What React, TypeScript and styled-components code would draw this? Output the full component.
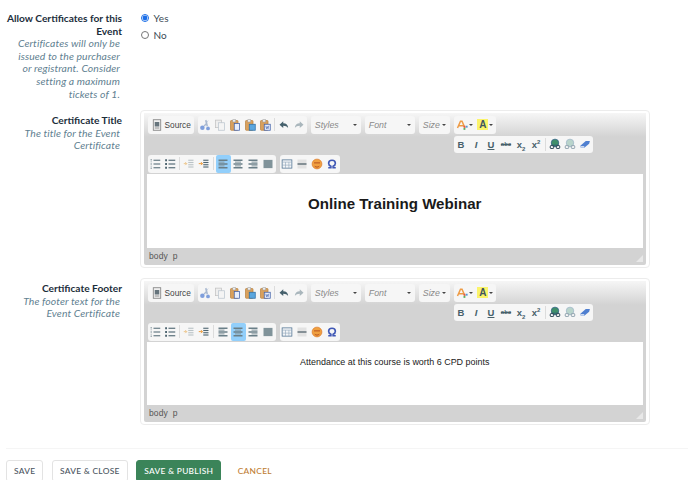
import * as React from 'react';
import styled, { createGlobalStyle } from 'styled-components';

const GlobalStyle = createGlobalStyle`
  html, body {
    margin: 0;
    height: 480px;
    overflow: hidden;
    background: #fff;
    font-family: 'Lato', 'Noto Sans', sans-serif;
  }
`;

const Page = styled.div`
  width: 688px;
  height: 480px;
  overflow: hidden;
  box-sizing: border-box;
  padding-top: 12px;
`;

const FormRow = styled.div`
  display: grid;
  grid-template-columns: 122px 510px;
  column-gap: 18px;
  margin-bottom: 10px;
`;

const Label = styled.div<{ $top?: number }>`
  text-align: right;
  padding-top: ${p => p.$top ?? 0}px;
`;

const Title = styled.div`
  font-size: 10.2px;
  line-height: 12.6px;
  font-weight: 700;
  color: #1c2e3b;
`;

const Help = styled.div`
  font-size: 10.4px;
  line-height: 12.6px;
  font-style: italic;
  letter-spacing: 0.1px;
  color: #5f7f91;
  padding: 0 2px 0 8px;
`;

const Options = styled.div`
  display: flex;
  flex-direction: column;
  gap: 5px;
`;

const Option = styled.label`
  display: flex;
  align-items: center;
  gap: 5px;
  height: 12px;
  font-size: 10px;
  letter-spacing: 0.1px;
  color: #3a4a55;
`;

const Radio = styled.input`
  width: 8px;
  height: 8px;
  margin: 0 0 0 0.5px;
  accent-color: #1a6ee8;
`;

const EditorBox = styled.div`
  box-sizing: border-box;
  border: 1px solid #ececec;
  border-radius: 4px;
  padding: 2px 3px;
  width: 510px;
`;

const Editor = styled.div`
  background: #d3d3d3;
  border-radius: 2px;
`;

const Toolbar = styled.div`
  box-sizing: border-box;
  padding: 3px 0 0 3.5px;
  background: linear-gradient(#f6f6f6 0, #d3d3d3 24px);
  display: flex;
  flex-direction: column;
  gap: 2px;
  height: 61px;
`;

const ToolRow = styled.div<{ $indent?: number }>`
  display: flex;
  gap: 4px;
  height: 17.5px;
  padding-left: ${p => p.$indent ?? 0}px;
`;

const Group = styled.div`
  display: flex;
  align-items: center;
  background: #f6f6f6;
  border-radius: 3px;
`;

const ToolButton = styled.div<{ $active?: boolean }>`
  width: 15px;
  height: 17.5px;
  display: flex;
  align-items: center;
  justify-content: center;
  border-radius: 2px;
  background: ${p => (p.$active ? '#92cffb' : 'transparent')};
`;

const ToolSeparator = styled.div`
  width: 1px;
  height: 13px;
  margin: 0 1.5px;
  background: #dcdcdc;
`;

const SourceButton = styled.div`
  display: flex;
  align-items: center;
  gap: 2px;
  padding: 0 3px;
  font-family: 'Liberation Sans', sans-serif;
  font-size: 8.3px;
  color: #444;
`;

const Combo = styled.div<{ $width: number }>`
  box-sizing: border-box;
  width: ${p => p.$width}px;
  height: 17.5px;
  display: flex;
  align-items: center;
  justify-content: space-between;
  padding: 0 4px;
  background: #f6f6f6;
  border-radius: 3px;
  font-family: 'Liberation Sans', sans-serif;
  font-style: italic;
  font-size: 8.8px;
  color: #8a8a8a;
`;

const Caret = styled.span`
  width: 0;
  height: 0;
  border-left: 2px solid transparent;
  border-right: 2px solid transparent;
  border-top: 2.5px solid #444;
`;

const ColorButton = styled.div`
  width: 21px;
  height: 17.5px;
  display: flex;
  align-items: center;
  justify-content: center;
  gap: 1px;
`;

const Swatch = styled.span<{ $bg: string; $color: string }>`
  width: 11px;
  height: 11px;
  display: flex;
  align-items: center;
  justify-content: center;
  background: ${p => p.$bg};
  color: ${p => p.$color};
  font-family: 'Liberation Sans', sans-serif;
  font-weight: 700;
  font-size: 10px;
  line-height: 11px;
`;

const Glyph = styled.span<{ $italic?: boolean; $under?: boolean; $small?: boolean }>`
  font-family: 'Liberation Sans', sans-serif;
  font-weight: 700;
  font-size: ${p => (p.$small ? 6 : 9.5)}px;
  font-style: ${p => (p.$italic ? 'italic' : 'normal')};
  text-decoration: ${p => (p.$under ? 'underline' : p.$small ? 'line-through' : 'none')};
  color: #47606a;
  line-height: 1;
  sub, sup {
    font-size: 6px;
    line-height: 0;
  }
`;

const Content = styled.div<{ $height: number }>`
  margin: 0 3px 0 2.5px;
  height: ${p => p.$height}px;
  background: #fff;
  display: flex;
  justify-content: center;
  font-family: 'Liberation Sans', sans-serif;
  color: #1a1a1a;
  text-align: center;
`;

const Heading = styled.div`
  margin-top: 21px;
  font-size: 15.1px;
  line-height: 18px;
  font-weight: 700;
`;

const Paragraph = styled.div`
  margin-top: 14px;
  font-size: 8.95px;
  line-height: 12px;
`;

const StatusBar = styled.div`
  position: relative;
  height: 17px;
  display: flex;
  align-items: center;
  gap: 5px;
  padding: 0 0 1px 5px;
  box-sizing: border-box;
  font-family: 'Liberation Sans', sans-serif;
  font-size: 8.5px;
  letter-spacing: 0.1px;
  color: #555;
`;

const Grip = styled.div`
  position: absolute;
  right: 3px;
  bottom: 3px;
  width: 0;
  height: 0;
  border-left: 7px solid transparent;
  border-bottom: 7px solid #e8e8e8;
`;

const Actions = styled.div`
  margin: 23px 0 0 6px;
  padding-top: 11px;
  border-top: 1px solid #f5f5f5;
  display: flex;
  align-items: flex-start;
  gap: 8.5px;
`;

const ActionButton = styled.div<{ $variant?: 'plain' | 'primary' | 'link' }>`
  box-sizing: border-box;
  height: 22px;
  display: flex;
  align-items: center;
  padding: 0 7px;
  border-radius: 3px;
  font-size: 8.4px;
  font-weight: 500;
  letter-spacing: 0.3px;
  white-space: nowrap;
  border: 1px solid ${p => (p.$variant === 'primary' ? '#3b8459' : p.$variant === 'link' ? 'transparent' : '#e3e3e3')};
  background: ${p => (p.$variant === 'primary' ? '#3b8459' : '#fff')};
  color: ${p => (p.$variant === 'primary' ? '#fff' : p.$variant === 'link' ? '#c07d32' : '#4b5560')};
`;

const Svg = ({ children }: { children: React.ReactNode }) => (
  <svg width="12" height="12" viewBox="0 0 16 16" fill="none">
    {children}
  </svg>
);

const lines = (xs: number, xe: number, ys: number[], color: string, w = 1.5) =>
  ys.map(y => <path key={y} d={`M${xs} ${y}H${xe}`} stroke={color} strokeWidth={w} />);

const paste = (
  <>
    <rect x="2" y="2" width="10" height="13" rx="1" fill="#d9a05c" stroke="#b98444" />
    <rect x="5" y="1" width="4" height="3" fill="#eee" stroke="#999" strokeWidth="0.7" />
  </>
);

const icons: Record<string, React.ReactNode> = {
  source: (
    <>
      <rect x="3" y="1" width="10" height="14" fill="#eee" stroke="#777" />
      <rect x="5" y="4" width="6" height="6" fill="#66747c" />
      <path d="M5 12h6" stroke="#777" />
    </>
  ),
  cut: (
    <>
      <path d="M13 1L6 9l2 1 5-9zM8 2l2 8 2-1-2-8z" fill="#a9b9d0" />
      <circle cx="4.500" cy="11.500" r="3" fill="#7f9fdc" />
      <circle cx="12" cy="12.500" r="2.500" fill="#7f9fdc" />
    </>
  ),
  copy: (
    <>
      <rect x="2" y="1.500" width="8" height="10" fill="#eee" stroke="#c2c2c2" />
      <rect x="6" y="5" width="8" height="10" fill="#f4f4f4" stroke="#bcc6cf" />
    </>
  ),
  paste: (
    <>
      {paste}
      <rect x="7" y="6" width="7" height="9" fill="#e8eefb" stroke="#3f5fa8" />
    </>
  ),
  pasteText: (
    <>
      {paste}
      <rect x="7" y="7" width="8" height="8" fill="#5aa6de" stroke="#2d6ea5" />
    </>
  ),
  pasteWord: (
    <>
      {paste}
      <rect x="7" y="7" width="8" height="8" fill="#e8eefb" stroke="#3f5fa8" />
      <path d="M9 9l1 4 1-3 1 3 1-4" stroke="#3f5fa8" strokeWidth="0.8" />
    </>
  ),
  undo: <path d="M7 3L2 7.500 7 12V9c3 0 5 1 6.500 3 0-4-2.500-6.500-6.500-6.500z" fill="#45606c" />,
  redo: <path d="M9 3l5 4.500L9 12V9c-3 0-5 1-6.500 3 0-4 2.500-6.500 6.500-6.500z" fill="#a9b6bc" />,
  numbered: (
    <>
      {lines(6, 15, [3, 8, 13], '#5d737d')}
      {lines(2, 4, [2, 4, 7, 9, 12, 14], '#8a9aa2', 1)}
    </>
  ),
  bullets: (
    <>
      {lines(6, 15, [3, 8, 13], '#4e6570')}
      {lines(1.5, 4, [3, 8, 13], '#4e6570', 2.5)}
    </>
  ),
  outdent: (
    <>
      {lines(7, 14, [3, 6, 9, 12], '#b9c2c6')}
      <path d="M1 7.500h4M3 5.500l2 2-2 2" stroke="#ecc58b" strokeWidth="1.3" />
    </>
  ),
  indent: (
    <>
      {lines(7, 14, [3, 6, 9, 12], '#4e6570')}
      <path d="M1 7.500h5M4 5.500l2 2-2 2" stroke="#ea9a3b" strokeWidth="1.3" />
    </>
  ),
  left: (
    <>
      {lines(2, 14, [3, 8, 13], '#6a7f88', 2)}
      {lines(2, 10, [5.5, 10.5], '#8b9ca3', 1.5)}
    </>
  ),
  center: (
    <>
      {lines(2, 14, [3, 8, 13], '#6a7f88', 2)}
      {lines(4, 12, [5.5, 10.5], '#8b9ca3', 1.5)}
    </>
  ),
  right: (
    <>
      {lines(2, 14, [3, 8, 13], '#6a7f88', 2)}
      {lines(6, 14, [5.5, 10.5], '#8b9ca3', 1.5)}
    </>
  ),
  justify: <rect x="2" y="2.500" width="12" height="11" fill="#80939a" />,
  table: (
    <>
      <rect x="1.500" y="2.500" width="13" height="11" fill="#f3f5f7" stroke="#4d7090" />
      <path d="M1.500 5.500h13M6 5.500v8M10.500 5.500v8M1.500 9.500h13" stroke="#8ea5b8" strokeWidth="0.8" />
    </>
  ),
  rule: (
    <>
      <rect x="2" y="2" width="12" height="12" fill="#e2e2e2" />
      <path d="M2 8h12" stroke="#66747c" strokeWidth="2" />
    </>
  ),
  smiley: (
    <>
      <circle cx="8" cy="8" r="6.500" fill="#f0a040" stroke="#de7d2c" />
      <path d="M4 6.500h8M5 11c2 1.500 4 1.500 6 0" stroke="#b5501f" strokeWidth="1.3" />
    </>
  ),
  omega: (
    <path
      d="M3 13h3.500v-2C4.500 10.200 3.500 8.500 3.500 7 3.500 4.500 5.500 3 8 3s4.500 1.500 4.500 4c0 1.500-1 3.200-3 4v2H13"
      stroke="#3f57b5"
      strokeWidth="2.200"
    />
  ),
  link: (
    <>
      <circle cx="8" cy="6.500" r="5" fill="#3f8f6a" stroke="#2f5f86" />
      <path d="M3 9.500h10" stroke="#2d5a78" strokeWidth="1" />
      <rect x="1.500" y="10" width="5" height="4" rx="2" stroke="#37505e" strokeWidth="1.400" />
      <rect x="9.500" y="10" width="5" height="4" rx="2" stroke="#37505e" strokeWidth="1.400" />
    </>
  ),
  unlink: (
    <>
      <circle cx="8" cy="6.500" r="5" fill="#b9d4cb" stroke="#9db6c8" />
      <rect x="1.500" y="10" width="5" height="4" rx="2" stroke="#98a9b3" strokeWidth="1.400" />
      <rect x="9.500" y="10" width="5" height="4" rx="2" stroke="#98a9b3" strokeWidth="1.400" />
    </>
  ),
  eraser: (
    <>
      <path d="M1.500 10.500L9 4h5.500l-1 3.500L7 13H2.500z" fill="#4f7fd0" />
      <path d="M1.500 10.500h5.500L7 13H2.500z" fill="#c9d7ee" />
    </>
  ),
};

const Tool = ({ name, active }: { name: string; active?: boolean }) => (
  <ToolButton $active={active}>
    <Svg>{icons[name]}</Svg>
  </ToolButton>
);

const ToolbarRows = ({ align }: { align: string }) => (
  <Toolbar>
    <ToolRow>
      <Group>
        <SourceButton>
          <Svg>{icons.source}</Svg>
          Source
        </SourceButton>
      </Group>
      <Group>
        <Tool name="cut" />
        <Tool name="copy" />
        <Tool name="paste" />
        <Tool name="pasteText" />
        <Tool name="pasteWord" />
        <ToolSeparator />
        <Tool name="undo" />
        <Tool name="redo" />
      </Group>
      <Combo $width={50}>
        Styles
        <Caret />
      </Combo>
      <Combo $width={50}>
        Font
        <Caret />
      </Combo>
      <Combo $width={31}>
        Size
        <Caret />
      </Combo>
      <Group>
        <ColorButton>
          <Svg>
            <path d="M2 12L6 3h2l4 9M4 9h6" stroke="#ee9b45" strokeWidth="2" />
            <rect x="10" y="9" width="2.500" height="2.500" fill="#e2574c" />
            <rect x="13" y="9" width="2.500" height="2.500" fill="#4f9ad8" />
            <rect x="10" y="12" width="2.500" height="2.500" fill="#5cae62" />
          </Svg>
          <Caret />
        </ColorButton>
        <ColorButton>
          <Swatch $bg="#fbf46a" $color="#3f5560">
            A
          </Swatch>
          <Caret />
        </ColorButton>
      </Group>
    </ToolRow>
    <ToolRow $indent={306}>
      <Group>
        <ToolButton>
          <Glyph>B</Glyph>
        </ToolButton>
        <ToolButton>
          <Glyph $italic>I</Glyph>
        </ToolButton>
        <ToolButton>
          <Glyph $under>U</Glyph>
        </ToolButton>
        <ToolButton>
          <Glyph $small>abc</Glyph>
        </ToolButton>
        <ToolButton>
          <Glyph>
            x<sub>2</sub>
          </Glyph>
        </ToolButton>
        <ToolButton>
          <Glyph>
            x<sup>2</sup>
          </Glyph>
        </ToolButton>
        <ToolSeparator />
        <Tool name="link" />
        <Tool name="unlink" />
        <Tool name="eraser" />
      </Group>
    </ToolRow>
    <ToolRow>
      <Group>
        <Tool name="numbered" />
        <Tool name="bullets" />
        <ToolSeparator />
        <Tool name="outdent" />
        <Tool name="indent" />
        <ToolSeparator />
        <Tool name="left" active={align === 'left'} />
        <Tool name="center" active={align === 'center'} />
        <Tool name="right" />
        <Tool name="justify" />
      </Group>
      <Group>
        <Tool name="table" />
        <Tool name="rule" />
        <Tool name="smiley" />
        <Tool name="omega" />
      </Group>
    </ToolRow>
  </Toolbar>
);

const Status = () => (
  <StatusBar>
    <span>body</span>
    <span>p</span>
    <Grip />
  </StatusBar>
);

const App = () => (
  <Page>
    <GlobalStyle />
    <FormRow>
      <Label>
        <Title>Allow Certificates for this Event</Title>
        <Help>Certificates will only be issued to the purchaser or registrant. Consider setting a maximum tickets of 1.</Help>
      </Label>
      <Options>
        <Option>
          <Radio type="radio" name="allow" defaultChecked />
          Yes
        </Option>
        <Option>
          <Radio type="radio" name="allow" />
          No
        </Option>
      </Options>
    </FormRow>
    <FormRow>
      <Label $top={4}>
        <Title>Certificate Title</Title>
        <Help>The title for the Event Certificate</Help>
      </Label>
      <EditorBox>
        <Editor>
          <ToolbarRows align="left" />
          <Content $height={74}>
            <Heading>Online Training Webinar</Heading>
          </Content>
          <Status />
        </Editor>
      </EditorBox>
    </FormRow>
    <FormRow>
      <Label $top={4}>
        <Title>Certificate Footer</Title>
        <Help>The footer text for the Event Certificate</Help>
      </Label>
      <EditorBox>
        <Editor>
          <ToolbarRows align="center" />
          <Content $height={63}>
            <Paragraph>Attendance at this course is worth 6 CPD points</Paragraph>
          </Content>
          <Status />
        </Editor>
      </EditorBox>
    </FormRow>
    <Actions>
      <ActionButton>SAVE</ActionButton>
      <ActionButton>SAVE &amp; CLOSE</ActionButton>
      <ActionButton $variant="primary">SAVE &amp; PUBLISH</ActionButton>
      <ActionButton $variant="link">CANCEL</ActionButton>
    </Actions>
  </Page>
);

export default App;
